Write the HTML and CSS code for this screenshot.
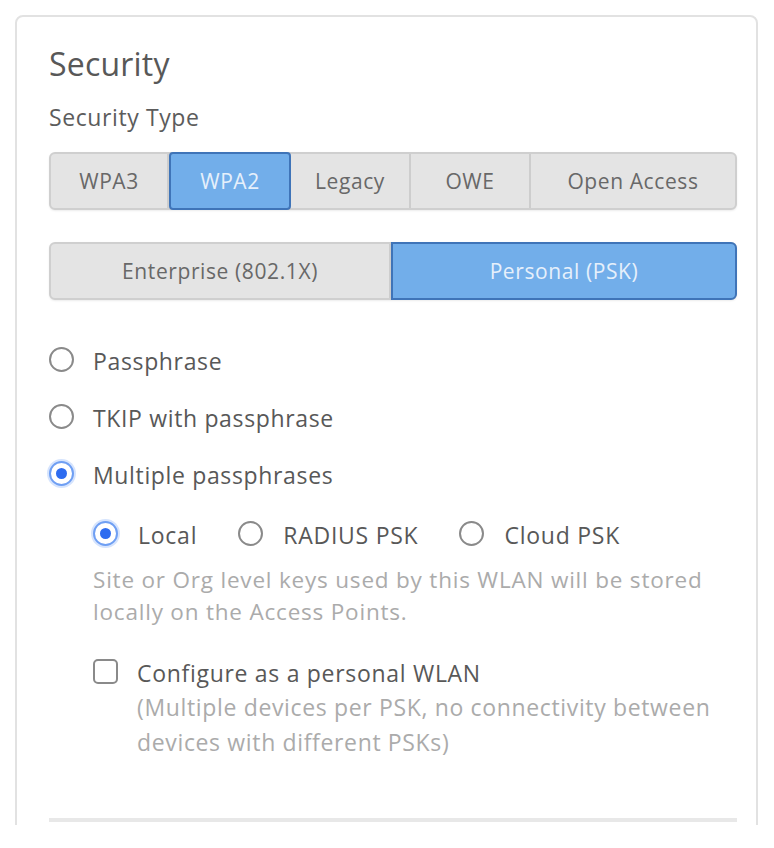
FILE: index.html
```html
<!DOCTYPE html>
<html>
<head>
<meta charset="utf-8">
<link rel="stylesheet" href="styles.css">
</head>
<body>
<div class="viewport">
  <div class="card">
    <h2 class="title">Security</h2>
    <div class="label">Security Type</div>
    <div class="seg seg-type">
      <div class="seg-btn w-wpa3">WPA3</div>
      <div class="seg-btn w-wpa2 active">WPA2</div>
      <div class="seg-btn w-legacy">Legacy</div>
      <div class="seg-btn w-owe">OWE</div>
      <div class="seg-btn w-open">Open Access</div>
    </div>
    <div class="seg seg-mode">
      <div class="seg-btn half">Enterprise (802.1X)</div>
      <div class="seg-btn half active">Personal (PSK)</div>
    </div>

    <div class="options">
      <div class="opt"><span class="radio"></span><span>Passphrase</span></div>
      <div class="opt"><span class="radio"></span><span>TKIP with passphrase</span></div>
      <div class="opt"><span class="radio checked"></span><span>Multiple passphrases</span></div>
    </div>

    <div class="sub">
      <div class="sub-row">
        <div class="opt"><span class="radio checked"></span><span>Local</span></div>
        <div class="opt"><span class="radio"></span><span>RADIUS PSK</span></div>
        <div class="opt"><span class="radio"></span><span>Cloud PSK</span></div>
      </div>
      <p class="help">Site or Org level keys used by this WLAN will be stored locally on the Access Points.</p>
      <div class="check-row">
        <span class="checkbox"></span>
        <div class="check-text">
          <div class="check-label">Configure as a personal WLAN</div>
          <div class="check-help">(Multiple devices per PSK, no connectivity between devices with different PSKs)</div>
        </div>
      </div>
    </div>

    <div class="divider"></div>
  </div>
</div>
</body>
</html>
```

FILE: styles.css
```css
* { box-sizing: border-box; }
html, body {
  margin: 0;
  padding: 0;
  background: #ffffff;
}
body {
  font-family: "Open Sans", "Liberation Sans", sans-serif;
  color: #5a5a5a;
}
.viewport {
  padding: 15px 16px 0 15px;
  height: 825px;
  overflow: hidden;
}
.card {
  border: 2px solid #e2e2e2;
  border-radius: 8px;
  padding: 27px 19px 0 32px;
  height: 900px;
  background: #fff;
}
.title {
  margin: 0;
  font-size: 32px;
  line-height: 40px;
  font-weight: 400;
  color: #585858;
  letter-spacing: 0.2px;
}
.label {
  margin-top: 18px;
  font-size: 23px;
  line-height: 30px;
  color: #5c5c5c;
  letter-spacing: 0.6px;
}
.seg {
  display: flex;
  height: 58px;
  border: 2px solid #cfcfcf;
  border-radius: 6px;
  background: #e4e4e4;
  box-shadow: 0 1px 2px rgba(0,0,0,0.08);
}
.seg-type { margin-top: 20px; }
.seg-mode { margin-top: 32px; }
.seg-btn {
  display: flex;
  align-items: center;
  justify-content: center;
  font-size: 21px;
  color: #686868;
  letter-spacing: 0.6px;
  border-right: 2px solid #cdcdcd;
}
.seg-btn:last-child { border-right: none; }
.seg-btn.active {
  background: #72aeea;
  color: #e6f0fb;
  border: 2px solid #3f74b8;
  margin: -2px 0;
  border-radius: 4px;
}
.seg-mode .seg-btn.active { margin: -2px -2px -2px 0; border-radius: 0 6px 6px 0; }
.w-wpa3 { width: 118px; }
.w-wpa2 { width: 122px; }
.w-legacy { width: 120px; }
.w-owe { width: 120px; }
.w-open { flex: 1; }
.half { flex: 1; }
.half:first-child { flex: 0 0 340px; }

.options {
  margin-top: 45px;
  display: flex;
  flex-direction: column;
  gap: 25px;
}
.opt {
  display: flex;
  align-items: center;
  gap: 19px;
  font-size: 23px;
  line-height: 32px;
  color: #585858;
  letter-spacing: 0.65px;
}
.radio {
  flex: none;
  width: 25px;
  height: 25px;
  border-radius: 50%;
  border: 2px solid #8a8a8a;
  background: #fff;
  position: relative;
  margin-top: -4px;
}
.radio.checked {
  border-color: #6f9ff3;
  box-shadow: 0 0 0 2px rgba(70,130,245,0.22);
}
.radio.checked::after {
  content: "";
  position: absolute;
  left: 50%;
  top: 50%;
  width: 11px;
  height: 11px;
  margin: -5.5px 0 0 -5.5px;
  border-radius: 50%;
  background: #2e6cf0;
}

.sub {
  padding-left: 44px;
  margin-top: 28px;
}
.sub-row {
  display: flex;
  gap: 41px;
}
.sub-row .opt { gap: 20px; letter-spacing: 0.75px; }
.help {
  margin: 13px 0 0 0;
  font-size: 22.5px;
  line-height: 32px;
  color: #ababab;
  letter-spacing: 0.8px;
  max-width: 625px;
}
.check-row {
  display: flex;
  gap: 19px;
  margin-top: 30px;
}
.checkbox {
  flex: none;
  width: 25px;
  height: 25px;
  border: 2px solid #8a8a8a;
  border-radius: 5px;
  margin-top: 1px;
}
.check-text { flex: 1; }
.check-label {
  font-size: 23px;
  line-height: 30px;
  color: #585858;
  letter-spacing: 0.7px;
}
.check-help {
  margin-top: 2px;
  font-size: 23px;
  line-height: 35px;
  color: #ababab;
  letter-spacing: 0.65px;
}
.divider {
  margin-top: 58px;
  height: 4px;
  background: #e8e8e8;
}
```
